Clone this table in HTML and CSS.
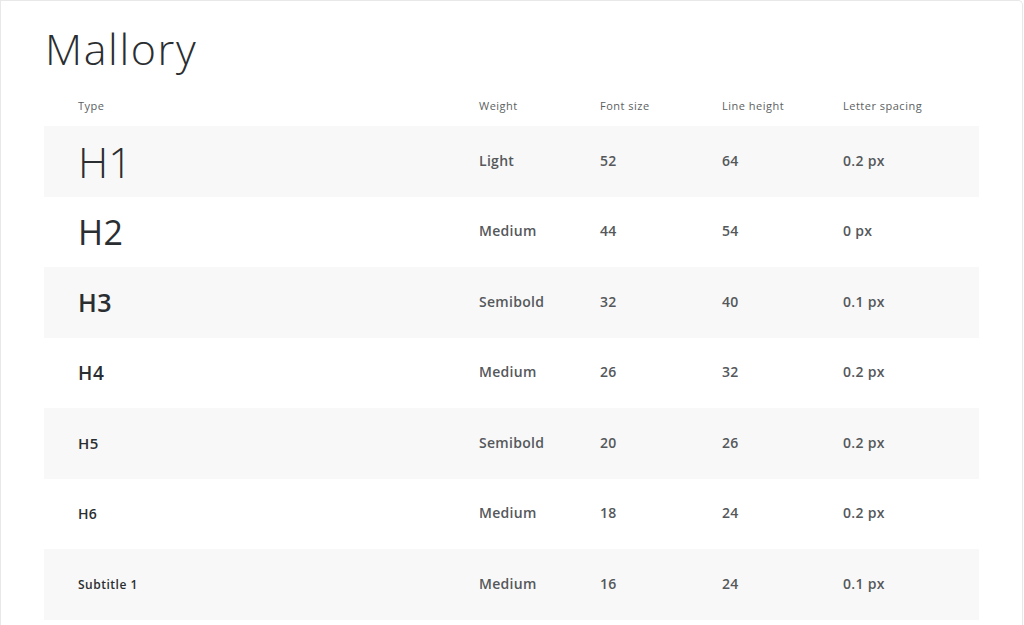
FILE: index.html
```html
<!DOCTYPE html>
<html>
<head>
<meta charset="utf-8">
<link rel="stylesheet" href="styles.css">
</head>
<body>
<div class="card">
  <h1 class="title">Mallory</h1>
  <div class="table">
    <div class="row head">
      <div class="c type">Type</div>
      <div class="c">Weight</div>
      <div class="c">Font size</div>
      <div class="c">Line height</div>
      <div class="c">Letter spacing</div>
    </div>
    <div class="row shade">
      <div class="c type t-h1">H1</div>
      <div class="c v">Light</div><div class="c v">52</div><div class="c v">64</div><div class="c v">0.2 px</div>
    </div>
    <div class="row">
      <div class="c type t-h2">H2</div>
      <div class="c v">Medium</div><div class="c v">44</div><div class="c v">54</div><div class="c v">0 px</div>
    </div>
    <div class="row shade">
      <div class="c type t-h3">H3</div>
      <div class="c v">Semibold</div><div class="c v">32</div><div class="c v">40</div><div class="c v">0.1 px</div>
    </div>
    <div class="row">
      <div class="c type t-h4">H4</div>
      <div class="c v">Medium</div><div class="c v">26</div><div class="c v">32</div><div class="c v">0.2 px</div>
    </div>
    <div class="row shade">
      <div class="c type t-h5">H5</div>
      <div class="c v">Semibold</div><div class="c v">20</div><div class="c v">26</div><div class="c v">0.2 px</div>
    </div>
    <div class="row">
      <div class="c type t-h6">H6</div>
      <div class="c v">Medium</div><div class="c v">18</div><div class="c v">24</div><div class="c v">0.2 px</div>
    </div>
    <div class="row shade">
      <div class="c type t-sub">Subtitle 1</div>
      <div class="c v">Medium</div><div class="c v">16</div><div class="c v">24</div><div class="c v">0.1 px</div>
    </div>
  </div>
</div>
</body>
</html>
```
FILE: styles.css
```css
html, body {
  margin: 0;
  padding: 0;
  background: #ffffff;
}
body {
  font-family: "Open Sans", "Noto Sans", sans-serif;
  color: #2b2e31;
  height: 625px;
  overflow: hidden;
}
.card {
  margin-right: 1px;
  border: 1px solid #e8e8e8;
  border-bottom: none;
  border-radius: 0 5px 0 0;
  padding: 20px 43px 0 43px;
  height: 625px;
  box-sizing: border-box;
  overflow: hidden;
}
.title {
  margin: 0 0 0 1px;
  font-weight: 300;
  font-size: 43px;
  line-height: 56px;
  letter-spacing: 1.6px;
  color: #2b2e31;
}
.table {
  margin-top: 19px;
}
.row {
  display: grid;
  grid-template-columns: 435px 121px 122px 121px 136px;
  align-items: center;
  height: 70.5px;
}
.row.head {
  height: 28px;
  padding-top: 2px;
  align-items: start;
}
.row.shade {
  background: #f8f8f8;
}
.c {
  font-size: 14px;
  font-weight: 600;
  letter-spacing: 0.3px;
  color: #55585b;
}
.v {
  padding-bottom: 2px;
}
.type {
  padding-left: 34px;
  color: #2b2e31;
}
.head .c {
  font-size: 11px;
  font-weight: 400;
  letter-spacing: 0.5px;
  color: #5c5f62;
}
.t-h1 { font-size: 42px; font-weight: 300; letter-spacing: 0; }
.t-h2 { font-size: 34px; font-weight: 400; letter-spacing: 0.5px; }
.t-h3 { font-size: 25px; font-weight: 600; letter-spacing: 0.4px; }
.t-h4 { font-size: 19px; font-weight: 600; letter-spacing: 0.6px; }
.t-h5 { font-size: 15px; font-weight: 600; letter-spacing: 0.4px; }
.t-h6 { font-size: 14px; font-weight: 600; letter-spacing: 0.3px; }
.t-sub { font-size: 12px; font-weight: 600; letter-spacing: 0.5px; }
```
